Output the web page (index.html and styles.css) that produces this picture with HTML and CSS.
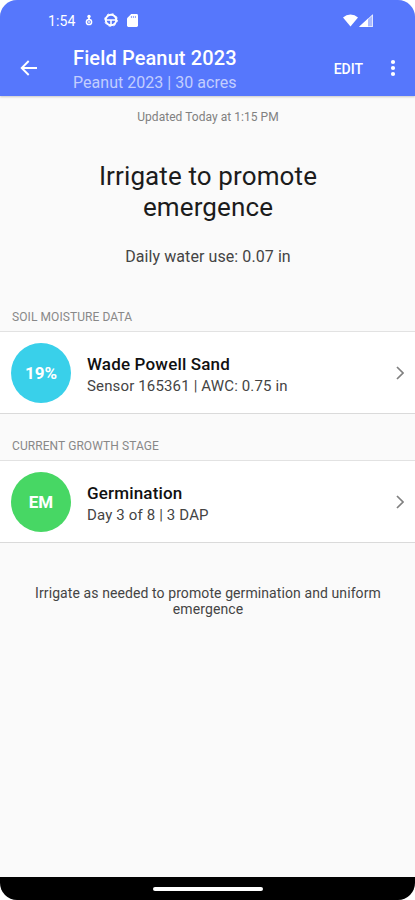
FILE: index.html
```html
<!DOCTYPE html>
<html lang="en">
<head>
    <meta charset="UTF-8">
    <meta name="viewport" content="width=device-width, initial-scale=1.0">
    <title>Field Peanut 2023</title>
    <link rel="stylesheet" href="styles.css">
</head>
<body>
<div class="phone">
    <header class="header">
        <div class="status-bar">
            <span class="time">1:54</span>
            <svg class="icon-usb" width="8" height="12" viewBox="0 0 8 12">
                <circle cx="4" cy="2.4" r="1.7" fill="#fff"/>
                <path d="M4 2V6" stroke="#fff" stroke-width="1.8"/>
                <circle cx="4" cy="8" r="2.6" fill="none" stroke="#fff" stroke-width="1.5"/>
                <circle cx="4" cy="8" r="0.9" fill="#fff"/>
            </svg>
            <svg class="icon-wheel" width="14" height="14" viewBox="0 0 14 14">
                <circle cx="7" cy="7" r="5.3" fill="none" stroke="#fff" stroke-width="1.9"/>
                <circle cx="7" cy="7" r="6.4" fill="none" stroke="#fff" stroke-width="0.9" stroke-dasharray="2.2 2.83"/>
                <path d="M2 7H12M7 7V12" fill="none" stroke="#fff" stroke-width="1.6"/>
            </svg>
            <svg class="icon-card" width="11" height="13" viewBox="0 0 11 13">
                <path d="M4.2 0H9.6Q11 0 11 1.4V11.6Q11 13 9.6 13H1.4Q0 13 0 11.6V4.2Z" fill="#fff"/>
                <path d="M4.4 2V4M6.4 2V4M8.4 2V4" stroke="#5677fc" stroke-width="0.7"/>
            </svg>
            <svg class="icon-wifi" width="15" height="13" viewBox="0 0 16 13">
                <path d="M8 13L0 3.2Q3.4 0 8 0T16 3.2Z" fill="#fff"/>
            </svg>
            <svg class="icon-signal" width="14" height="13" viewBox="0 0 14 13">
                <path d="M0 13L14 0V13Z" fill="#fff" opacity="0.5"/>
                <path d="M0 13L9 4.6V13Z" fill="#fff"/>
                <path d="M1 12.6L13.6 1V12.6Z" fill="none" stroke="#fff" stroke-width="0.7"/>
            </svg>
        </div>
        <div class="app-bar">
            <svg class="icon-back" width="18" height="16" viewBox="0 0 18 16">
                <path d="M17 8H2M8.7 1L1.7 8l7 7" fill="none" stroke="#fff" stroke-width="1.9"/>
            </svg>
            <div class="titles">
                <div class="title">Field Peanut 2023</div>
                <div class="subtitle">Peanut 2023 | 30 acres</div>
            </div>
            <span class="edit">EDIT</span>
            <svg class="icon-more" width="6" height="18" viewBox="0 0 6 18">
                <circle cx="3" cy="3" r="2.1" fill="#fff"/>
                <circle cx="3" cy="9" r="2.1" fill="#fff"/>
                <circle cx="3" cy="15" r="2.1" fill="#fff"/>
            </svg>
        </div>
    </header>

    <main class="content">
        <p class="updated">Updated Today at 1:15 PM</p>
        <h1>Irrigate to promote<br>emergence</h1>
        <p class="water-use">Daily water use: 0.07 in</p>

        <h2 class="soil-label">SOIL MOISTURE DATA</h2>
        <div class="row">
            <div class="badge moisture">19%</div>
            <div class="info">
                <div class="name">Wade Powell Sand</div>
                <div class="detail">Sensor 165361 | AWC: 0.75 in</div>
            </div>
            <svg class="chevron" width="8" height="14" viewBox="0 0 8 14">
                <path d="M1 1l6 6-6 6" fill="none" stroke="#808080" stroke-width="1.7"/>
            </svg>
        </div>

        <h2 class="stage-label">CURRENT GROWTH STAGE</h2>
        <div class="row">
            <div class="badge stage">EM</div>
            <div class="info">
                <div class="name">Germination</div>
                <div class="detail">Day 3 of 8 | 3 DAP</div>
            </div>
            <svg class="chevron" width="8" height="14" viewBox="0 0 8 14">
                <path d="M1 1l6 6-6 6" fill="none" stroke="#808080" stroke-width="1.7"/>
            </svg>
        </div>

        <p class="advice">Irrigate as needed to promote germination and uniform<br>emergence</p>
    </main>

    <footer class="nav-bar">
        <div class="handle"></div>
    </footer>
</div>
</body>
</html>
```
FILE: styles.css
```css
body {
    margin: 0;
    background-color: #fff;
    font-family: Roboto, sans-serif;
}

p, h1, h2 {
    margin: 0;
    font-weight: normal;
}

svg {
    display: block;
    flex-shrink: 0;
}

.phone {
    display: flex;
    flex-direction: column;
    width: 415px;
    height: 900px;
    border-radius: 17px;
    overflow: hidden;
    background-color: #fafafa;
}

/* Header */
.header {
    height: 96px;
    background-color: #5677fc;
    color: #fff;
    box-shadow: 0 1px 2px rgba(0, 0, 0, 0.2);
}

.status-bar {
    display: flex;
    align-items: center;
    height: 40px;
    padding: 0 42px 0 48px;
}

.time {
    width: 36px;
    padding-top: 1px;
    font-size: 14px;
    letter-spacing: 0.1px;
}

.icon-usb {
    margin-left: 1px;
}

.icon-wheel {
    margin-left: 11px;
}

.icon-card {
    margin-left: 9px;
}

.icon-wifi {
    margin-left: auto;
}

.icon-signal {
    margin-left: 1px;
}

.app-bar {
    display: flex;
    align-items: center;
    height: 56px;
    padding: 0 19px 0 20px;
}

.titles {
    margin-left: 35px;
    padding-top: 3px;
}

.title {
    font-size: 20px;
    font-weight: 500;
    line-height: 25px;
    letter-spacing: 0.12px;
}

.subtitle {
    font-size: 16px;
    line-height: 23px;
    letter-spacing: 0.03px;
    color: #c3cefe;
}

.edit {
    margin-left: auto;
    padding-top: 1px;
    font-size: 14px;
    font-weight: 500;
}

.icon-more {
    margin-left: 27px;
}

/* Content */
.content {
    flex: 1;
    color: #444;
}

.updated {
    padding: 13px 0 0 1px;
    font-size: 12px;
    line-height: 16px;
    letter-spacing: 0.04px;
    text-align: center;
    color: #808080;
}

h1 {
    padding: 36px 0 0 1px;
    font-size: 26px;
    line-height: 31px;
    letter-spacing: 0.12px;
    text-align: center;
    color: #1c1c1c;
}

.water-use {
    padding: 23px 0 0 1px;
    font-size: 16px;
    line-height: 22px;
    letter-spacing: 0.08px;
    text-align: center;
}

h2 {
    padding-left: 12px;
    font-size: 12px;
    line-height: 16px;
    letter-spacing: 0.08px;
    color: #888;
}

.soil-label {
    padding-top: 41px;
    padding-bottom: 6px;
}

.stage-label {
    padding-top: 24px;
    padding-bottom: 6px;
}

.row {
    display: flex;
    align-items: center;
    box-sizing: border-box;
    height: 83px;
    padding: 0 11px;
    background-color: #fff;
    border-top: 1px solid #e2e2e2;
    border-bottom: 1px solid #dadada;
}

.badge {
    width: 60px;
    height: 60px;
    border-radius: 50%;
    line-height: 61px;
    text-align: center;
    font-size: 17px;
    font-weight: bold;
    color: #fff;
}

.moisture {
    background-color: #39d0ea;
}

.stage {
    background-color: #47d764;
}

.info {
    margin-left: 16px;
    padding-top: 4px;
}

.name {
    font-size: 17px;
    font-weight: 500;
    line-height: 22px;
    letter-spacing: 0.17px;
    color: #111;
}

.detail {
    font-size: 15px;
    line-height: 22px;
    letter-spacing: 0.15px;
}

.chevron {
    margin-left: auto;
}

.advice {
    padding: 42px 0 0 1px;
    font-size: 14px;
    line-height: 16px;
    letter-spacing: 0.09px;
    text-align: center;
}

/* Gesture bar */
.nav-bar {
    display: flex;
    justify-content: center;
    height: 23px;
    background-color: #000;
}

.handle {
    width: 110px;
    height: 4px;
    margin-top: 10px;
    border-radius: 2px;
    background-color: #fff;
}
```
